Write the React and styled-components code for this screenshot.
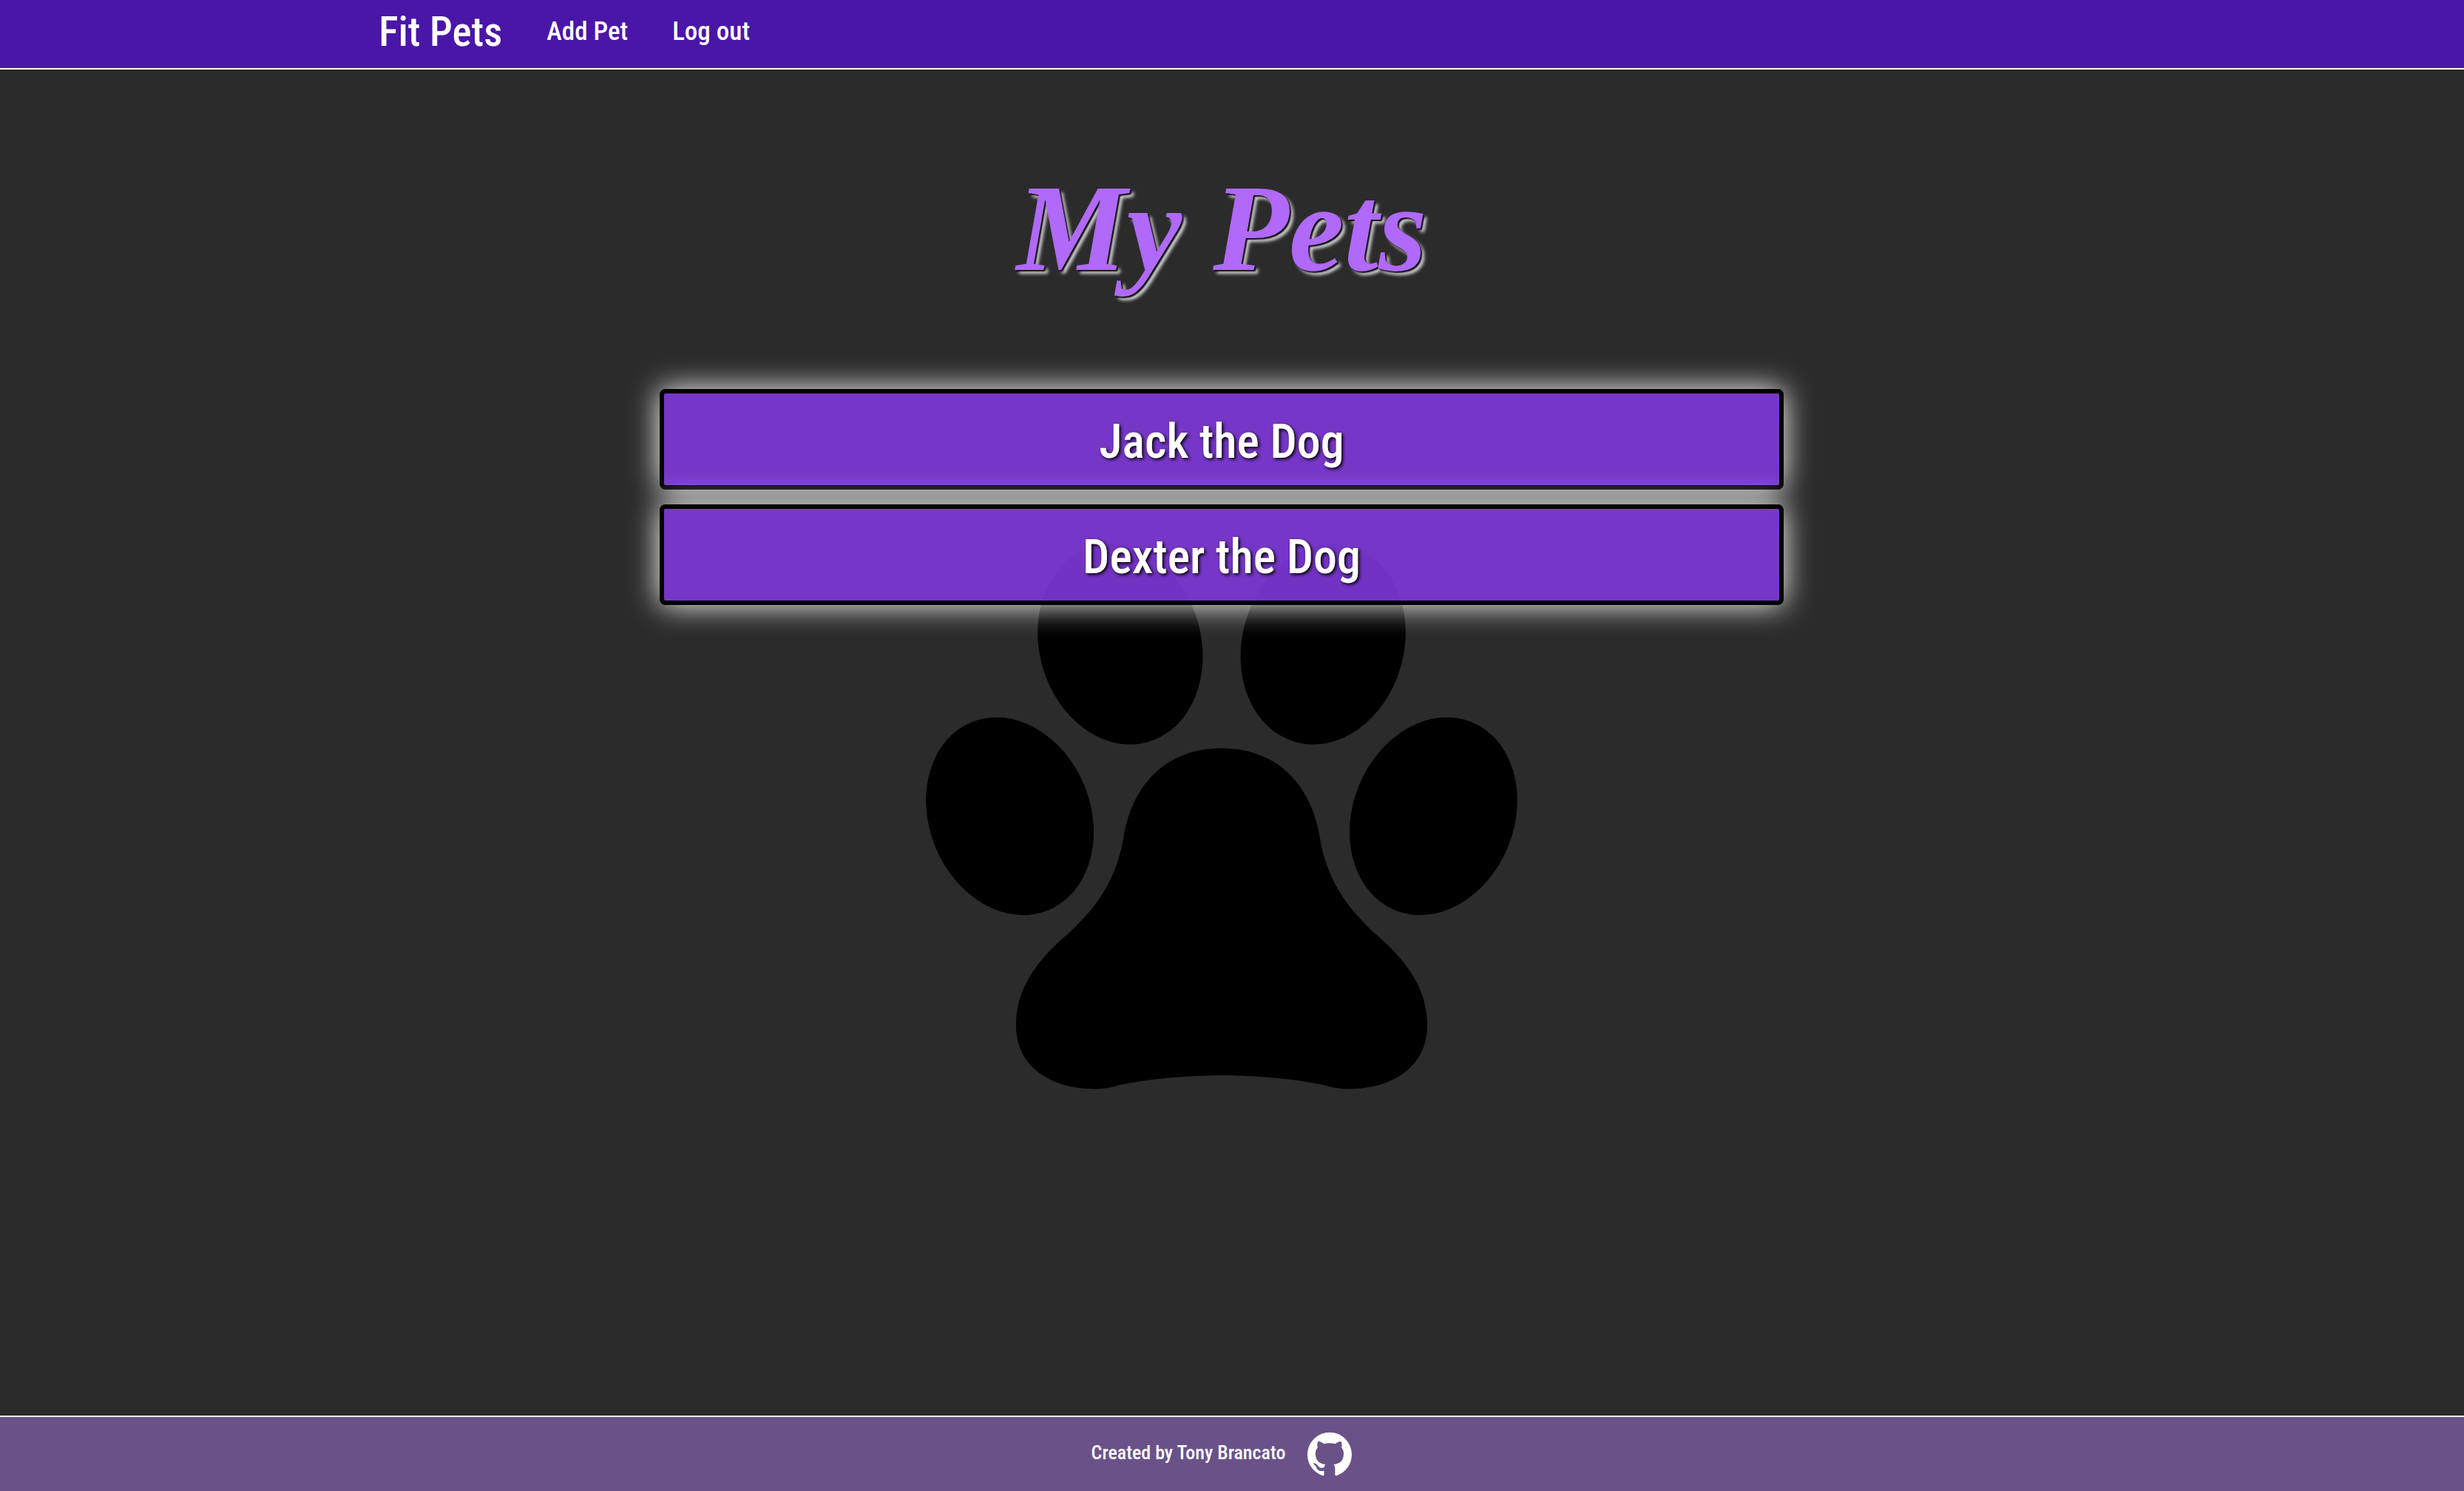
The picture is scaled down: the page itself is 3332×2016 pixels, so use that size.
import React from "react";
import styled, { createGlobalStyle } from "styled-components";
import { SiGithub } from "react-icons/si";

const condensed = `"Roboto Condensed", Roboto, sans-serif`;

const GlobalStyle = createGlobalStyle`
  *, *::before, *::after { box-sizing: border-box; }
  body {
    margin: 0;
    background: #2b2b2b;
    color: #fff;
    font-family: ${condensed};
    font-weight: 500;
  }
`;

const Page = styled.div`
  min-height: 100vh;
  display: flex;
  flex-direction: column;
`;

const Header = styled.header`
  background: #4a16a7;
  border-bottom: 2px solid #fff;
  padding-right: 28px;
`;

const Nav = styled.nav`
  width: 69%;
  margin: 0 auto;
  height: 92px;
  padding-bottom: 6px;
  display: flex;
  align-items: center;
  gap: 60px;
`;

const Brand = styled.a`
  color: #fff;
  text-decoration: none;
  font-size: 55px;
  line-height: 80px;
`;

const NavLink = styled.a`
  color: #fff;
  text-decoration: none;
  font-size: 35px;
  line-height: 80px;
`;

const Main = styled.main`
  flex: 1;
  display: grid;
  justify-items: center;
  align-items: start;
  padding-right: 28px;
`;

const Backdrop = styled.svg`
  grid-area: 1 / 1;
  width: 800px;
  max-width: 80%;
  height: auto;
  margin-top: 642px;
  fill: #000;
`;

const Content = styled.section`
  grid-area: 1 / 1;
  z-index: 1;
  width: 46%;
  display: flex;
  flex-direction: column;
  align-items: stretch;
`;

const Title = styled.h1`
  margin: 0;
  padding: 112px 0 116px;
  text-align: center;
  font-family: "Liberation Serif", serif;
  font-style: italic;
  font-weight: 700;
  font-size: 168px;
  line-height: 204px;
  color: #b069f8;
  text-shadow: 2px 2px 2px #000, 5px 5px 4px #ddd;
`;

const PetList = styled.ul`
  list-style: none;
  margin: 0;
  padding: 0;
  display: grid;
  gap: 20px;
`;

const PetButton = styled.button`
  display: block;
  width: 100%;
  height: 136px;
  padding: 8px 0 0;
  border: 6px solid #000;
  border-radius: 8px;
  background: rgba(126, 56, 217, 0.9);
  box-shadow: 0 0 40px #fff;
  color: #fff;
  font-family: inherit;
  font-weight: 500;
  font-size: 64px;
  line-height: 80px;
  text-shadow: 2px 2px 4px #000;
  cursor: pointer;
`;

const Footer = styled.footer`
  height: 102px;
  padding-right: 28px;
  border-top: 2px solid #fff;
  background: #6a5289;
  display: flex;
  align-items: center;
  justify-content: center;
  gap: 30px;
`;

const Credit = styled.span`
  font-size: 26px;
  line-height: 40px;
  padding-bottom: 4px;
`;

const GithubLink = styled.a`
  display: flex;
  color: #fff;
`;

const PAD =
  "M452 311.7C376 311.7 330 362.3 319 433.7C307.7 500 272.7 535.7 244 562.8C203.8 597 173.9 635.2 173.9 686.2C173.9 742.4 221 772.4 281.3 772.4C297.3 772.4 305.4 769.4 315.7 766.8C344.4 760.2 401.8 754 452 754C502.2 754 559.6 760.2 588.3 766.8C598.6 769.4 606.7 772.4 622.7 772.4C683 772.4 730.1 742.4 730.1 686.2C730.1 635.2 700.2 597 660 562.8C631.3 535.7 596.3 500 585 433.7C574 362.3 528 311.7 452 311.7Z";

function Paw() {
  return (
    <Backdrop viewBox="52 36 800 737" aria-hidden="true">
      <ellipse cx="314.8" cy="171.3" rx="109.3" ry="137.2" transform="rotate(-15.9 314.8 171.3)" />
      <ellipse cx="589.2" cy="171.3" rx="109.3" ry="137.2" transform="rotate(15.9 589.2 171.3)" />
      <ellipse cx="165.6" cy="403.6" rx="109" ry="137.3" transform="rotate(-22 165.6 403.6)" />
      <ellipse cx="738.4" cy="403.6" rx="109" ry="137.3" transform="rotate(22 738.4 403.6)" />
      <path d={PAD} />
    </Backdrop>
  );
}

const pets = ["Jack the Dog", "Dexter the Dog"];

export default function App() {
  return (
    <Page>
      <GlobalStyle />
      <Header>
        <Nav>
          <Brand href="#home">Fit Pets</Brand>
          <NavLink href="#add">Add Pet</NavLink>
          <NavLink href="#logout">Log out</NavLink>
        </Nav>
      </Header>
      <Main>
        <Paw />
        <Content>
          <Title>My Pets</Title>
          <PetList>
            {pets.map((pet) => (
              <li key={pet}>
                <PetButton type="button">{pet}</PetButton>
              </li>
            ))}
          </PetList>
        </Content>
      </Main>
      <Footer>
        <Credit>Created by Tony Brancato</Credit>
        <GithubLink href="#github" aria-label="GitHub">
          <SiGithub size={60} />
        </GithubLink>
      </Footer>
    </Page>
  );
}
